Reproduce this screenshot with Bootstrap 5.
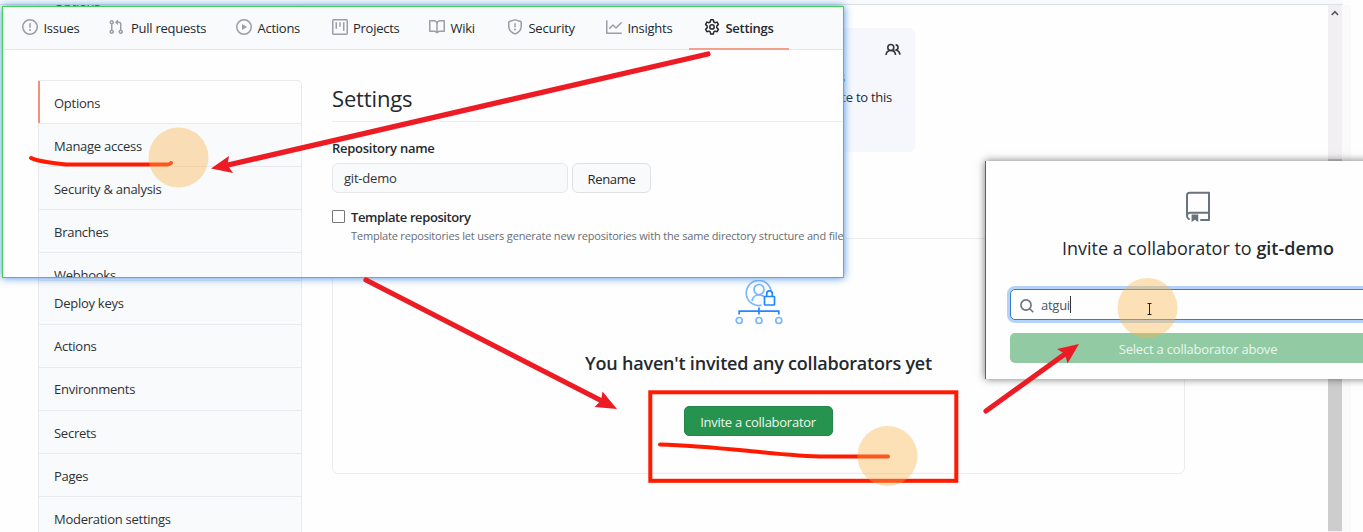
<!DOCTYPE html>
<html lang="en">
<head>
<meta charset="utf-8">
<meta name="viewport" content="width=device-width, initial-scale=1">
<title>Manage access</title>
<link href="https://cdn.jsdelivr.net/npm/bootstrap@5.3.0/dist/css/bootstrap.min.css" rel="stylesheet">
<style>
  body { font-family: "Open Sans", "Noto Sans", sans-serif; font-size: 13px; line-height: 20px; letter-spacing: -.26px; color: #24292e; background: #fefefe; height: 532px; overflow: hidden; }
  svg { display: block; flex: none; }
  .shell { height: 532px; }
  .topstrip { height: 5px; background: #f8f9fb; border-bottom: 1px solid #dfe0e3; width: 1343px; }
  .pagebody { width: 1328px; height: 527px; }
  .scroller { width: 14px; height: 527px; background: #f1eff2; }
  .thumb { height: 372px; background: #cdcdcd; margin-top: 136px; }
  .gutter { width: 9px; background: #fafafb; }
  .sidemenu { width: 264px; --bs-list-group-bg: #f9fafc; --bs-list-group-color: #2c3137; --bs-list-group-border-color: #e8eaee; --bs-list-group-border-radius: 5px; --bs-list-group-item-padding-x: 15px; }
  .sidemenu .list-group-item { height: 43.2px; padding-top: 2px; padding-bottom: 0; display: flex; align-items: center; }
  .menu-back .list-group-item { padding-top: 1px; }
  .sidemenu .covered { height: 259.2px; }
  .menu-back { margin: -26px 0 0 38px; }
  .maincol { margin-left: 30px; width: 853px; padding-top: 23px; }
  .rolebox { width: 280px; height: 124px; margin-left: 303px; background: #f6f7fc; border-radius: 6px; padding: 12px 14px 0; }
  .rolebox p { padding-right: 9px; line-height: 20px; margin: 8px 0 0; }
  .rolebox .people { color: #0366d6; padding-right: 56px; line-height: 19px; }
  .rolebox .people + p { margin-top: 0; }
  .emptybox { margin-top: 86px; height: 236px; border: 1px solid #ececef; border-radius: 6px; padding-top: 41px; }
  .emptybox h3 { font-size: 18px; font-weight: 600; line-height: 26px; letter-spacing: -.2px; margin: 24px 0 30px; color: #24292e; }
  .invite { width: 149px; height: 30px; background: #26934f; border: 1px solid #23874a; color: #eef8f0; border-radius: 5px; font-size: 13px; line-height: 20px; letter-spacing: -.26px; padding: 1px 0 0; margin-right: 1px; }

  .win-settings { position: absolute; left: 2px; top: 6px; width: 842px; height: 272px; background: #fefefe; border: 1px solid #44d058; box-shadow: 0 0 8px #4a90e2; overflow: hidden; }
  .reponav { display: grid; grid-template-columns: 86px 128px 95.5px 97.5px 78px 99px 98px 100px; height: 43px; padding-left: 4px; background: #f9fafc; border-bottom: 1px solid #e4e7ea; }
  .reponav a { display: flex; align-items: center; gap: 5.5px; height: 43px; padding: 0 0 1px 15px; color: #24292e; text-decoration: none; white-space: nowrap; }
  .reponav a.pulls { gap: 7px; }
  .reponav svg { fill: #9a9ea5; margin-bottom: 2px; }
  .reponav a.current { font-weight: 600; letter-spacing: -.3px; box-shadow: inset 0 -2px #f5a08d; }
  .reponav a.current svg { fill: #24292e; }
  .menu-front { margin: 30px 0 0 35px; }
  .menu-front .list-group-item { height: 43px; }
  .menu-front .first-row { background: #fefefe; box-shadow: inset 2px 0 #f4907e; border-left: 0; border-top-left-radius: 0; padding-left: 16px; height: 44px; }
  .settings { margin: 30px 0 0 30px; width: 511px; white-space: nowrap; }
  .settings h2 { font-size: 22px; font-weight: 400; line-height: 36px; letter-spacing: -.15px; height: 42px; border-bottom: 1px solid #eceef1; margin-bottom: 16px; }
  .fieldname { font-weight: 600; }
  .namebox { width: 236px; height: 30px; font-size: 13px; letter-spacing: -.2px; color: #2f343a; background: #f9fafc; border: 1px solid #e5e8eb; border-radius: 6px; padding: 0 11px; }
  .rename { width: 79px; height: 30px; padding: 1px 0 0; font-size: 13px; line-height: 20px; letter-spacing: -.3px; color: #24292e; background: #f9fafc; border: 1px solid #dfe1e4; border-radius: 6px; }
  .namerow { margin-top: 5px; margin-bottom: 14px; }
  .tick { width: 13px; height: 13px; border: 1px solid #767676; border-radius: 1px; margin-top: 3px; background: #fff; }
  .tickrow { gap: 6px; }
  .tickrow .fieldname { letter-spacing: -.4px; }
  .hint { font-size: 11px; line-height: 16px; letter-spacing: -.18px; color: #666d75; padding: 1px 0 0 19px; }

  .win-invite { position: absolute; left: 985px; top: 161px; width: 425px; height: 218px; background: #fefefe; border-left: 1px solid #5d646d; box-shadow: 0 0 8px rgba(0,0,0,.55); padding: 30px 24px 0; }
  .win-invite h4 { font-size: 18px; font-weight: 400; line-height: 27px; letter-spacing: 0; margin: 12px 0 27px; }
  .win-invite h4 b { font-weight: 600; }
  .finder { height: 31px; border: 1px solid #3b7cc4; border-radius: 5px; box-shadow: 0 0 0 3px #b3d3f8; padding-left: 9px; color: #4d545c; background: #fefefe; }
  .finder span { margin-left: 7px; }
  .finder svg { margin-top: 2px; }
  .finder i { width: 1px; height: 17px; background: #333; }
  .choose { height: 30px; margin-top: 13px; background: #91caa3; border-radius: 5px; color: #e9f7ec; letter-spacing: -.2px; padding-top: 1px; }
  .notes { position: absolute; left: 0; top: 0; pointer-events: none; }
</style>
</head>
<body>
<div class="shell position-relative overflow-hidden">
  <div class="topstrip"></div>
  <div class="d-flex">
    <div class="pagebody d-flex align-items-start overflow-hidden">
      <nav class="list-group sidemenu menu-back">
        <a class="list-group-item">Options</a>
        <div class="list-group-item covered"></div>
        <a class="list-group-item">Deploy keys</a>
        <a class="list-group-item">Actions</a>
        <a class="list-group-item">Environments</a>
        <a class="list-group-item">Secrets</a>
        <a class="list-group-item">Pages</a>
        <a class="list-group-item">Moderation settings</a>
      </nav>
      <main class="maincol">
        <div class="rolebox">
          <div class="d-flex justify-content-end">
            <svg width="16" height="20" viewBox="0 0 16 20" fill="none" stroke="#32363c" stroke-width="1.6"><circle cx="5.8" cy="7.500" r="3"/><path d="M1 15c.3-3 2.200-4.500 4.800-4.500s4.500 1.500 4.800 4.500M10.600 4.900c3 .2 3.300 4.300.6 5.200 2.200.6 3.400 2.200 3.800 4.600"/></svg>
          </div>
          <p class="text-end people">collaborators</p>
          <p class="text-end">contribute to this</p>
        </div>
        <div class="emptybox d-flex flex-column align-items-center">
          <svg width="50" height="46" viewBox="0 0 50 46" fill="none" stroke-width="1.7" stroke="#79b8ff">
            <circle cx="25" cy="9.500" r="5"/><path d="M37 10.500a12.500 12.500 0 1 0-9.500 14.700M18 21c.7-4 3-6 7-6 2.200 0 4 .7 5.200 1.700"/>
            <g stroke="#2188ff"><rect x="30.500" y="16.500" width="10" height="8.500" rx=".6"/><path d="M32.700 16.500v-2.800a2.800 2.800 0 0 1 5.600 0v2.800M5.200 34.500v-3.300h39.600v3.300M25 27.500v7"/></g>
            <circle cx="5.200" cy="40.500" r="3"/><circle cx="25" cy="40.500" r="3"/><circle cx="44.800" cy="40.500" r="3"/>
          </svg>
          <h3>You haven't invited any collaborators yet</h3>
          <button class="btn invite">Invite a collaborator</button>
        </div>
      </main>
    </div>
    <div class="scroller">
      <svg width="14" height="18" viewBox="0 0 14 18" fill="none" stroke="#55585c" stroke-width="1.600"><path d="M3.700 10l3.200-3.400L10.100 10"/></svg>
      <div class="thumb"></div>
    </div>
    <div class="gutter"></div>
  </div>

  <section class="win-settings">
    <nav class="reponav">
      <a><svg width="16" height="16" viewBox="0 0 16 16"><path fill-rule="evenodd" d="M8 1.500a6.500 6.500 0 1 0 0 13 6.500 6.500 0 0 0 0-13zM0 8a8 8 0 1 1 16 0A8 8 0 0 1 0 8zm9 3a1 1 0 1 1-2 0 1 1 0 0 1 2 0zm-.25-6.250a.75.75 0 0 0-1.500 0v3.500a.75.75 0 0 0 1.500 0v-3.500z"/></svg>Issues</a>
      <a class="pulls"><svg width="16" height="16" viewBox="0 0 16 16"><path fill-rule="evenodd" d="M7.177 3.073L9.573.677A.25.25 0 0 1 10 .854v4.792a.25.25 0 0 1-.427.177L7.177 3.427a.25.25 0 0 1 0-.354zM3.750 2.500a.75.75 0 1 0 0 1.500.75.75 0 0 0 0-1.500zm-2.250.75a2.250 2.250 0 1 1 3 2.122v5.256a2.251 2.251 0 1 1-1.500 0V5.372A2.250 2.250 0 0 1 1.500 3.250zM11 2.500h-1V4h1a1 1 0 0 1 1 1v5.628a2.251 2.251 0 1 0 1.500 0V5A2.500 2.500 0 0 0 11 2.500zm1 10.250a.75.75 0 1 1 1.500 0 .75.75 0 0 1-1.500 0zM3.750 12a.75.75 0 1 0 0 1.500.75.75 0 0 0 0-1.500z"/></svg>Pull requests</a>
      <a><svg width="16" height="16" viewBox="0 0 16 16"><path fill-rule="evenodd" d="M1.500 8a6.500 6.500 0 1 1 13 0 6.500 6.500 0 0 1-13 0zM8 0a8 8 0 1 0 0 16A8 8 0 0 0 8 0zM6.379 5.227A.25.25 0 0 0 6 5.442v5.117a.25.25 0 0 0 .379.214l4.264-2.559a.25.25 0 0 0 0-.428L6.379 5.227z"/></svg>Actions</a>
      <a><svg width="16" height="16" viewBox="0 0 16 16"><path fill-rule="evenodd" d="M1.750 0A1.750 1.750 0 0 0 0 1.750v12.500C0 15.216.784 16 1.750 16h12.500A1.750 1.750 0 0 0 16 14.250V1.750A1.750 1.750 0 0 0 14.250 0H1.750zM1.500 1.750a.25.25 0 0 1 .25-.25h12.500a.25.25 0 0 1 .25.25v12.500a.25.25 0 0 1-.25.25H1.750a.25.25 0 0 1-.25-.25V1.750zM11.750 3a.75.75 0 0 0-.75.75v7.500a.75.75 0 0 0 1.500 0v-7.500a.75.75 0 0 0-.75-.75zm-8.250.75a.75.75 0 0 1 1.500 0v5.500a.75.75 0 0 1-1.500 0v-5.500zM8 3a.75.75 0 0 0-.75.75v3.500a.75.75 0 0 0 1.500 0v-3.500A.75.75 0 0 0 8 3z"/></svg>Projects</a>
      <a><svg width="16" height="16" viewBox="0 0 16 16"><path fill-rule="evenodd" d="M0 1.750A.75.75 0 0 1 .75 1h4.253c1.227 0 2.317.59 3 1.501A3.744 3.744 0 0 1 11.006 1h4.245a.75.75 0 0 1 .75.75v10.500a.75.75 0 0 1-.75.75h-4.507a2.250 2.250 0 0 0-1.591.659l-.622.621a.75.75 0 0 1-1.060 0l-.622-.621A2.250 2.250 0 0 0 5.258 13H.75a.75.75 0 0 1-.75-.75V1.750zm8.755 3a2.250 2.250 0 0 1 2.250-2.250H14.500v9h-3.757c-.71 0-1.400.201-1.992.572l.004-7.322zm-1.504 7.324l.004-5.073-.002-2.253A2.250 2.250 0 0 0 5.003 2.500H1.500v9h3.757a3.750 3.750 0 0 1 1.994.574z"/></svg>Wiki</a>
      <a><svg width="16" height="16" viewBox="0 0 16 16"><path fill-rule="evenodd" d="M7.467.133a1.750 1.750 0 0 1 1.066 0l5.250 1.680A1.750 1.750 0 0 1 15 3.480V7c0 1.566-.32 3.182-1.303 4.682-.983 1.498-2.585 2.813-5.032 3.855a1.700 1.700 0 0 1-1.330 0c-2.447-1.042-4.049-2.357-5.032-3.855C1.320 10.182 1 8.566 1 7V3.480a1.750 1.750 0 0 1 1.217-1.667L7.467.133zm.61 1.429a.25.25 0 0 0-.153 0l-5.250 1.680a.25.25 0 0 0-.174.238V7c0 1.358.275 2.666 1.057 3.860.784 1.194 2.121 2.340 4.366 3.297a.2.2 0 0 0 .154 0c2.245-.956 3.582-2.104 4.366-3.298C13.225 9.666 13.500 8.360 13.500 7V3.480a.25.25 0 0 0-.174-.237l-5.250-1.680zM9 10.500a1 1 0 1 1-2 0 1 1 0 0 1 2 0zm-.25-5.750a.75.75 0 1 0-1.500 0v3a.75.75 0 0 0 1.500 0v-3z"/></svg>Security</a>
      <a><svg width="16" height="16" viewBox="0 0 16 16"><path fill-rule="evenodd" d="M1.500 1.750a.75.75 0 0 0-1.500 0v12.500c0 .414.336.75.75.75h14.500a.75.75 0 0 0 0-1.500H1.500V1.750zm14.280 2.530a.75.75 0 0 0-1.060-1.060L10 7.940 7.530 5.470a.75.75 0 0 0-1.060 0L3.220 8.720a.75.75 0 0 0 1.060 1.060L7 7.060l2.470 2.470a.75.75 0 0 0 1.060 0l5.250-5.250z"/></svg>Insights</a>
      <a class="current"><svg width="16" height="16" viewBox="0 0 16 16"><g fill="none" stroke="#24292e" stroke-width="1.500" stroke-linejoin="round"><path d="M6.700.8h2.600l.5 2.200 1.200.7 2.100-.6 1.300 2.300-1.600 1.600v1.800l1.600 1.600-1.300 2.300-2.100-.6-1.200.7-.5 2.200H6.700l-.5-2.200-1.200-.7-2.100.6-1.300-2.300 1.600-1.600V7L1.600 5.400l1.300-2.300 2.100.6L6.200 3z"/><circle cx="8" cy="7.900" r="2.200"/></g></svg>Settings</a>
    </nav>
    <div class="d-flex align-items-start">
      <nav class="list-group sidemenu menu-front">
        <a class="list-group-item first-row">Options</a>
        <a class="list-group-item">Manage access</a>
        <a class="list-group-item">Security &amp; analysis</a>
        <a class="list-group-item">Branches</a>
        <a class="list-group-item">Webhooks</a>
      </nav>
      <div class="settings">
        <h2>Settings</h2>
        <div class="fieldname">Repository name</div>
        <div class="d-flex gap-1 namerow">
          <div class="namebox d-flex align-items-center">git-demo</div>
          <button class="btn rename">Rename</button>
        </div>
        <div class="d-flex tickrow">
          <span class="tick"></span>
          <span class="fieldname">Template repository</span>
        </div>
        <div class="hint">Template repositories let users generate new repositories with the same directory structure and file</div>
      </div>
    </div>
  </section>

  <section class="win-invite">
    <div class="d-flex flex-column align-items-center">
      <svg width="32" height="32" viewBox="0 0 24 24" fill="#6a737d"><path d="M7.200 17.600h5v5.600l-2.500-1.700-2.500 1.700z"/><path fill-rule="evenodd" d="M3 3.250A2.750 2.750 0 0 1 5.750.5h14.500a.75.75 0 0 1 .75.75v20.500a.75.75 0 0 1-.75.75h-6a.75.75 0 0 1 0-1.500h5.250v-4H6A1.500 1.500 0 0 0 4.500 18.500v.25c0 .716.430 1.334 1.050 1.605a.75.75 0 0 1-.6 1.374A3.250 3.250 0 0 1 3 18.750v-15.500zM19.500 2v13.500H6c-.546 0-1.059.146-1.500.401V3.250C4.500 2.560 5.060 2 5.750 2H19.500z"/></svg>
      <h4>Invite a collaborator to <b>git-demo</b></h4>
    </div>
    <div class="finder d-flex align-items-center">
      <svg width="14" height="14" viewBox="0 0 14 14" fill="none" stroke="#6a737d" stroke-width="1.600"><circle cx="6" cy="6" r="5.100"/><path d="M9.700 9.700l3.600 3.600"/></svg>
      <span>atgui</span><i></i>
    </div>
    <div class="choose d-flex align-items-center justify-content-center">Select a collaborator above</div>
  </section>

  <svg class="notes" width="1363" height="532" viewBox="0 0 1363 532" fill="none">
    <path d="M31 158c7 4 21 4.500 35 6.500h101q3 0 4-1.500" stroke="#ff1a00" stroke-width="4" stroke-linecap="round"/>
    <path d="M660 444.500c35 1 68 4.500 100 7.500 24 2.500 46 4.500 66 4.500h62" stroke="#ff1a00" stroke-width="4" stroke-linecap="round"/>
    <rect x="650.300" y="392.300" width="306" height="88.500" stroke="#ff1a00" stroke-width="4"/>
    <g fill="#fbb34c" fill-opacity=".4"><circle cx="178.500" cy="157.500" r="30"/><circle cx="887.500" cy="456" r="30"/><circle cx="1147.500" cy="308" r="30"/></g>
    <g stroke="#ed1c24" stroke-width="5.200" stroke-linecap="round"><path d="M708 54L228 165"/><path d="M366 280L600 400"/><path d="M986 411L1065 354"/></g>
    <g fill="#ed1c24"><path d="M211 168.500L229 156l-1.500 9 5.500 8z"/><path d="M617 409L602.500 391.500l-1.500 9-6.500 6.500z"/><path d="M1079 344L1057 349l8 5 2.500 9.500z"/></g>
    <path d="M1147.500 303.500h4M1147.500 314.500h4M1149.500 303.500v11" stroke="#222"/>
  </svg>
</div>
<script src="https://cdn.jsdelivr.net/npm/bootstrap@5.3.0/dist/js/bootstrap.bundle.min.js"></script>
</body>
</html>
